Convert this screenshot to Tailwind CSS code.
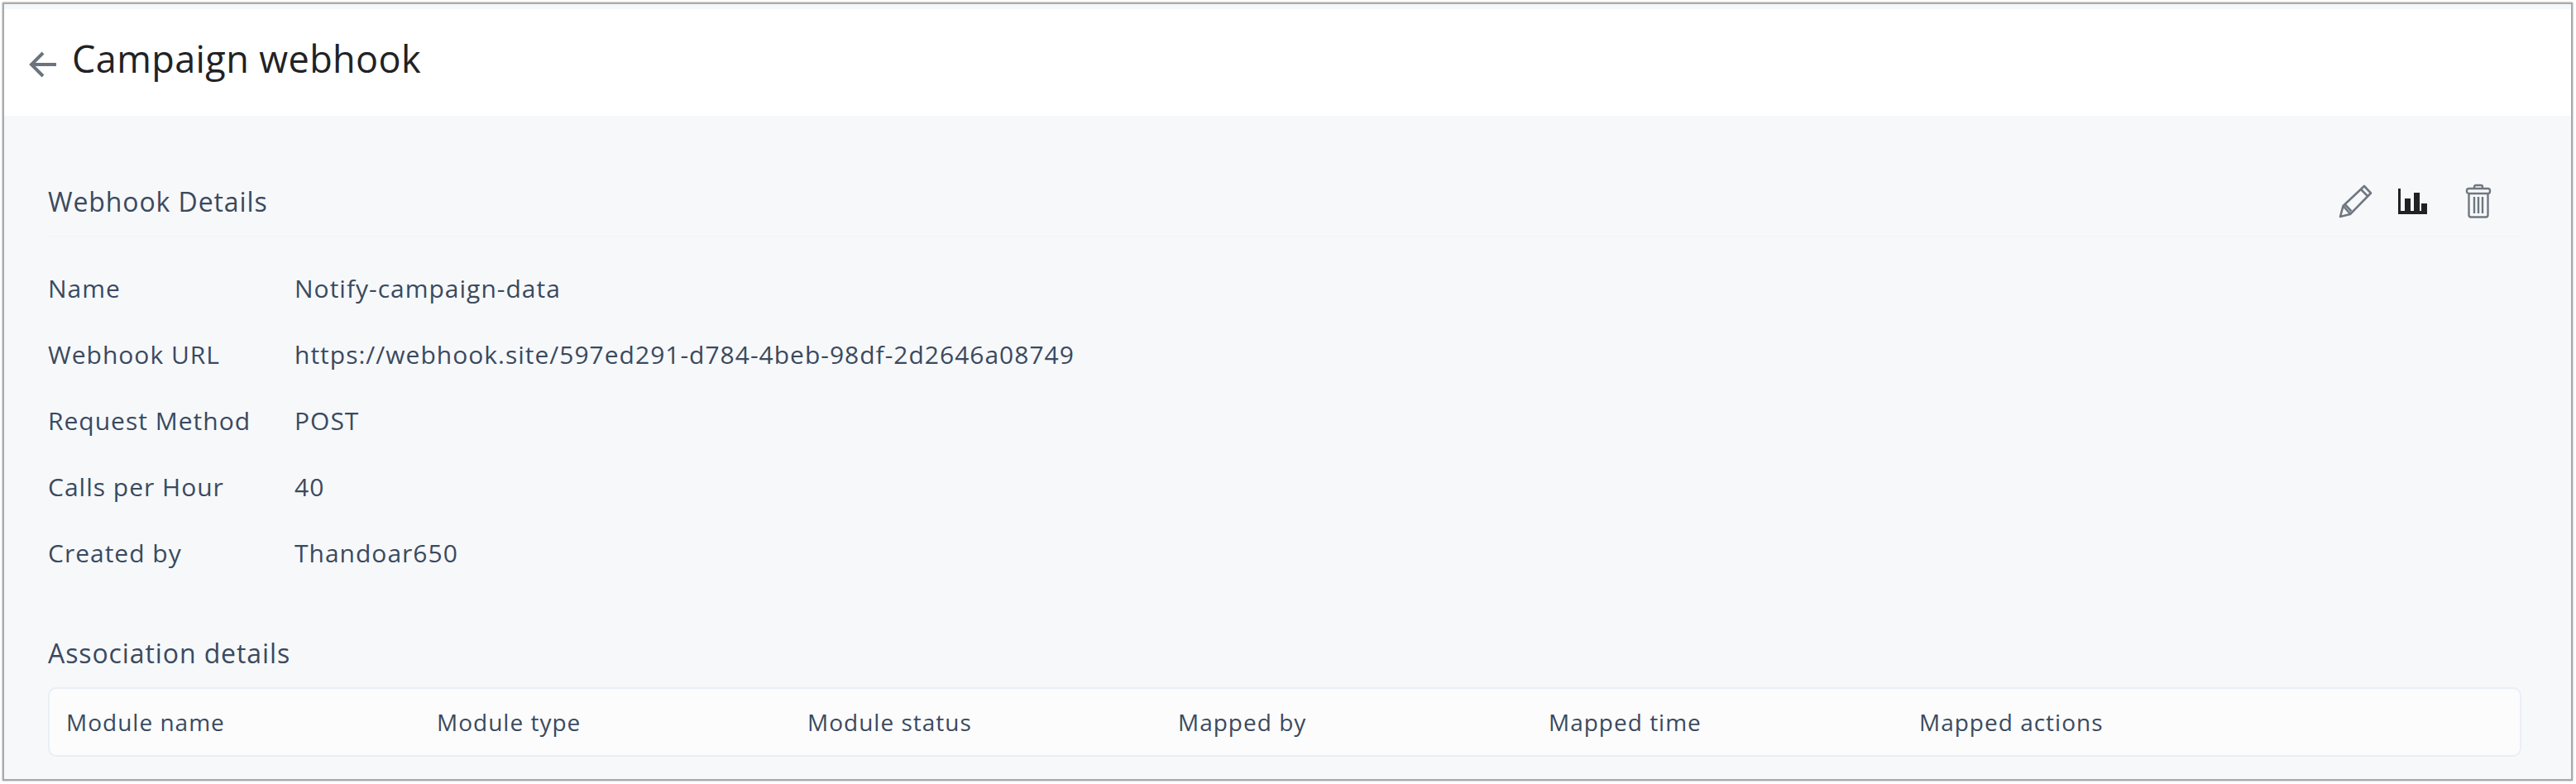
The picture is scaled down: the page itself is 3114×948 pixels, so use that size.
<!DOCTYPE html>
<html lang="en">
<head>
  <meta charset="UTF-8" />
  <title>Campaign webhook</title>
  <script src="https://cdn.jsdelivr.net/npm/@tailwindcss/browser@4"></script>
</head>
<body class="bg-white font-['Open_Sans',sans-serif]">
  <div class="w-[3114px] h-[948px] p-[3px] overflow-hidden">
    <div class="h-[941px] w-[3107px] border-2 border-[#a9a9a9] flex flex-col bg-[#f7f8fa] shadow-[0_0_2px_#999]">
      <!-- Header -->
      <header class="h-[135px] bg-white border-t-[6px] border-[#f5f8fa] flex items-center pl-[30px] pb-[10px] shrink-0">
        <svg class="w-[34px] h-[34px] mt-[14px]" viewBox="0 0 34 34" fill="none" stroke="#6b747c" stroke-width="4">
          <path d="M33 17H3M17 3 3 17l14 14" />
        </svg>
        <h1 class="ml-[18px] text-[45px] leading-none text-[#212224] tracking-[0.4px]">Campaign webhook</h1>
      </header>

      <main class="flex-1 pl-[53px] pr-[60px]">
        <!-- Webhook details -->
        <section class="h-[84px] mt-[63px] border-b-2 border-[#f2f6f8] flex items-center justify-between">
          <h2 class="text-[32px] text-[#3a4a5f] tracking-[0.9px]">Webhook Details</h2>
          <div class="flex items-center mr-[36px] mb-[2px]">
            <svg class="w-[42px] h-[42px]" viewBox="0 0 42 42" fill="none" stroke="#6f7881" stroke-width="2.6" stroke-linejoin="round">
              <path d="M2 40 5.500 27 31 3l8 8.500-25 25.500z" />
              <path d="M5.500 27l8.500 9.500M8 25.500l7.500 8M27 7l8.500 8.500" />
            </svg>
            <svg class="w-[36px] h-[32px] ml-[29px]" viewBox="0 0 36 32" fill="#212224">
              <path d="M1 1h3v27h5V13h7v15h4V6h7v22h2V19h7v13H1z" />
            </svg>
            <svg class="w-[32px] h-[42px] ml-[46px]" viewBox="0 0 32 42" fill="none" stroke="#6f7881" stroke-width="2.4">
              <path d="M11 6V4q0-2 2-2h6q2 0 2 2v2" />
              <rect x="2" y="6" width="28" height="6" rx="2.500" />
              <path d="M4.500 12v26q0 2.500 2.500 2.500h18q2.500 0 2.500-2.500V12M11 16v20M16 16v20M21 16v20" />
            </svg>
          </div>
        </section>

        <dl class="mt-[22px] text-[30px] leading-[80px] text-[#3a4a5f] tracking-[1px]">
          <div class="flex"><dt class="w-[298px]">Name</dt><dd>Notify-campaign-data</dd></div>
          <div class="flex"><dt class="w-[298px]">Webhook URL</dt><dd>https://webhook.site/597ed291-d784-4beb-98df-2d2646a08749</dd></div>
          <div class="flex"><dt class="w-[298px]">Request Method</dt><dd>POST</dd></div>
          <div class="flex"><dt class="w-[298px]">Calls per Hour</dt><dd>40</dd></div>
          <div class="flex"><dt class="w-[298px]">Created by</dt><dd>Thandoar650</dd></div>
        </dl>

        <!-- Association details -->
        <h2 class="mt-[59px] text-[32px] leading-[44px] text-[#3a4a5f] tracking-[0.9px]">Association details</h2>
        <div class="mt-[19px] h-[84px] border-2 border-[#e9eff6] rounded-[10px] bg-[#fcfcfc] grid grid-cols-[448px_448px_448px_448px_448px_448px] items-center pl-[20px] text-[28px] text-[#3a4a5f] tracking-[1px]">
          <div>Module name</div>
          <div>Module type</div>
          <div>Module status</div>
          <div>Mapped by</div>
          <div>Mapped time</div>
          <div>Mapped actions</div>
        </div>
      </main>
    </div>
  </div>
</body>
</html>
